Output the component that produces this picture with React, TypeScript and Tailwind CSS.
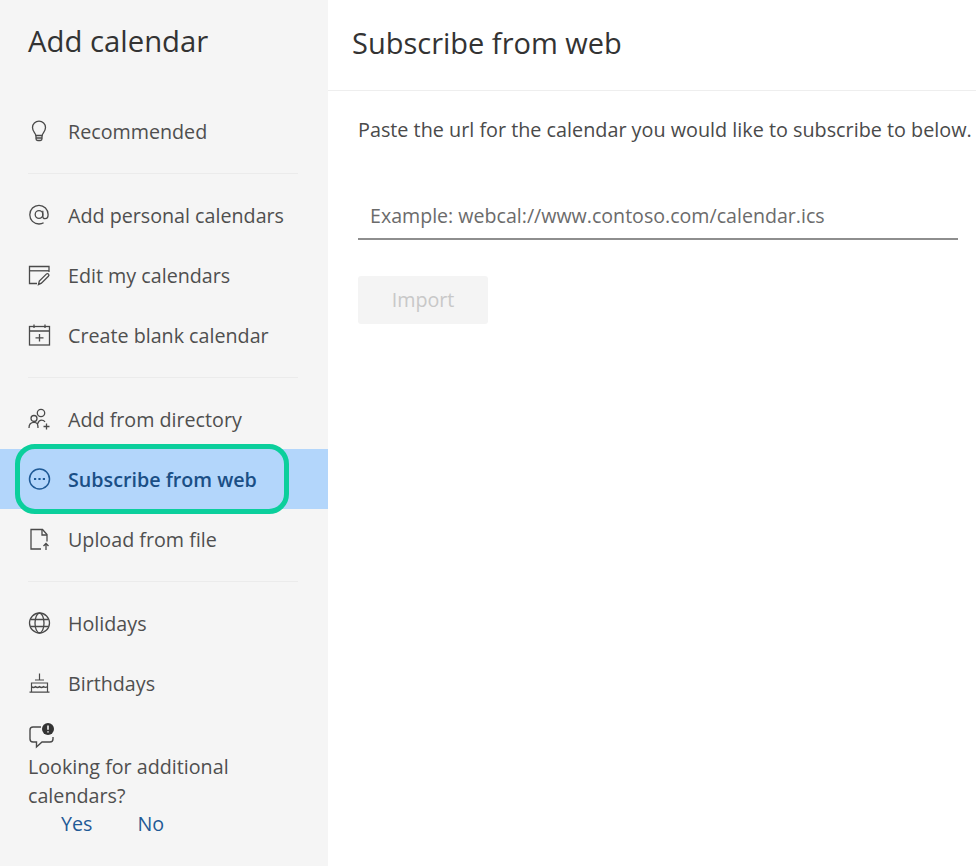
const iconClass = 'w-[24px] h-[24px] shrink-0 text-[#4a4a4a]';

function Bulb() {
  return (
    <svg className={iconClass} viewBox="0 0 24 24" fill="none" stroke="currentColor" strokeWidth="1.300">
      <path d="M8.800 16.500c0-2.200-3.300-3.600-3.300-8C5.500 5 8.400 2.200 12 2.200S18.500 5 18.500 8.500c0 4.400-3.300 5.800-3.300 8z" />
      <path d="M9 16.500v3.300c0 1 .8 1.700 1.700 1.700h2.600c.9 0 1.700-.7 1.700-1.700v-3.300M9 19h6" />
    </svg>
  );
}

function At() {
  return (
    <svg className={iconClass} viewBox="0 0 24 24" fill="none" stroke="currentColor" strokeWidth="1.300">
      <circle cx="12" cy="11.500" r="3.800" />
      <path d="M15.800 7.800v5.400c0 1.500 1 2.500 2.300 2.500 2 0 3-2 3-4.200 0-5-4-9.200-9.100-9.200S2.800 6.500 2.800 11.800 6.800 21 12 21c1.800 0 3.300-.4 4.600-1.200" />
    </svg>
  );
}

function EditCal() {
  return (
    <svg className={iconClass} viewBox="0 0 24 24" fill="none" stroke="currentColor" strokeWidth="1.300">
      <path d="M10 20.500H2.500V3.500h19.500v5.500" />
      <path d="M2.500 7.800h19.500" />
      <path d="M11.500 21.500l.8-3.400 7-7c.7-.7 1.700-.7 2.200 0 .6.600.5 1.500-.1 2.100l-7 7z" />
    </svg>
  );
}

function PlusCal() {
  return (
    <svg className={iconClass} viewBox="0 0 24 24" fill="none" stroke="currentColor" strokeWidth="1.300">
      <rect x="2.500" y="3.500" width="20" height="18.500" />
      <path d="M2.500 8h20M7 1.500v3.500M18 1.500v3.500M12.500 11v7.500M8.500 14.800h8" />
    </svg>
  );
}

function People() {
  return (
    <svg className={iconClass} viewBox="0 0 24 24" fill="none" stroke="currentColor" strokeWidth="1.300">
      <circle cx="14" cy="6" r="3.700" />
      <circle cx="7" cy="11.500" r="3" />
      <path d="M2 21c0-3.500 2.200-5.600 5-5.600 1.500 0 2.700.6 3.500 1.500 1-2.500 2.500-3.700 4-3.700s2.700.6 3.500 1.700M11 21c0-1.300-.2-2.800-.6-4M19.500 16.500v6M16.500 19.500h6" />
    </svg>
  );
}

function Dots() {
  return (
    <svg className={iconClass} viewBox="0 0 24 24" fill="none" stroke="#1f5a96" strokeWidth="1.500">
      <circle cx="12.500" cy="12" r="10" />
      <path d="M7 12h2.200M11.400 12h2.200M15.800 12h2.200" strokeWidth="2" />
    </svg>
  );
}

function UploadFile() {
  return (
    <svg className={iconClass} viewBox="0 0 24 24" fill="none" stroke="currentColor" strokeWidth="1.300">
      <path d="M14 22H4V2.500h11.500L20 7.500v7" />
      <path d="M15 2.500v5.500h5M19 23v-6M16.500 19l2.500-2.500 2.500 2.500" />
    </svg>
  );
}

function Globe() {
  return (
    <svg className={iconClass} viewBox="0 0 24 24" fill="none" stroke="currentColor" strokeWidth="1.300">
      <circle cx="12.500" cy="12" r="10" />
      <ellipse cx="12.500" cy="12" rx="4.500" ry="10" />
      <path d="M3.200 8.500h18.600M3.200 15.500h18.600" />
    </svg>
  );
}

function Cake() {
  return (
    <svg className={iconClass} viewBox="0 0 24 24" fill="none" stroke="currentColor" strokeWidth="1.200">
      <path d="M12.500 2.500v6.500M4.500 21v-9h16v9M2.500 21.200h20M8 9h9M4.500 15.500c1.300 1.300 2.700 1.300 4 0 1.300 1.300 2.700 1.300 4 0 1.300 1.300 2.700 1.300 4 0 1.300 1.300 2.700 1.300 4 0" />
    </svg>
  );
}

function Feedback() {
  return (
    <svg className="w-[28px] h-[26px] text-[#4a4a4a]" viewBox="0 0 28 26" fill="none" stroke="currentColor" strokeWidth="1.400">
      <path d="M13 4H5C3 4 2 5 2 7v9c0 2 1 3 3 3h3.500v5l5.500-5h8c2 0 3-1 3-3v-2" />
      <circle cx="20" cy="6" r="6" fill="#333333" stroke="none" />
      <path d="M20 2.500v4.200M20 8.200v1.300" stroke="#ffffff" strokeWidth="1.500" />
    </svg>
  );
}

function Item({ icon, label, active }: { icon: React.ReactNode; label: string; active?: boolean }) {
  return (
    <div className={`h-[60px] flex items-center gap-[17px] pl-[27px] text-[19.700px] ${active ? 'bg-[#b3d6fb] text-[#1a4f86] font-semibold' : 'text-[#4f4f4f]'}`}>
      {icon}
      <span className="pt-[2px]">{label}</span>
    </div>
  );
}

function Divider() {
  return <div className="h-px bg-[#ebebeb] ml-[28px] mr-[30px] mt-[12px] mb-[11px]" />;
}

export default function App() {
  return (
    <div className="w-[976px] h-[866px] flex bg-white overflow-hidden" style={{ fontFamily: '"Open Sans", "Noto Sans", sans-serif' }}>
      <aside className="relative w-[328px] shrink-0 bg-[#f5f5f5]">
        <h2 className="h-[101px] pl-[28px] pt-[20px] text-[29.300px] leading-[42px] font-medium text-[#333333]">Add calendar</h2>
        <Item icon={<Bulb />} label="Recommended" />
        <Divider />
        <Item icon={<At />} label="Add personal calendars" />
        <Item icon={<EditCal />} label="Edit my calendars" />
        <Item icon={<PlusCal />} label="Create blank calendar" />
        <Divider />
        <Item icon={<People />} label="Add from directory" />
        <Item icon={<Dots />} label="Subscribe from web" active />
        <Item icon={<UploadFile />} label="Upload from file" />
        <Divider />
        <Item icon={<Globe />} label="Holidays" />
        <Item icon={<Cake />} label="Birthdays" />
        <div className="pl-[28px] pt-[10px] text-[19.700px] leading-[28.500px] text-[#4f4f4f]">
          <Feedback />
          <p className="w-[240px] mt-[4px]">Looking for additional calendars?</p>
          <div className="flex gap-[45px] pl-[33px] text-[#1f5a96]">
            <span>Yes</span>
            <span>No</span>
          </div>
        </div>
        <div className="absolute left-[15px] top-[444px] w-[274px] h-[70px] rounded-[20px] border-[5px] border-[#0bcf9c]" />
      </aside>
      <main className="flex-1 min-w-0">
        <header className="h-[91px] border-b border-[#eeeeee] pl-[24px] pt-[22px]">
          <h1 className="text-[29px] leading-[42px] font-medium text-[#333333] whitespace-nowrap">Subscribe from web</h1>
        </header>
        <div className="pl-[30px] pt-[25px]">
          <p className="text-[19.800px] leading-[28px] text-[#4a4a4a] whitespace-nowrap">Paste the url for the calendar you would like to subscribe to below.</p>
          <div className="w-[600px] h-[62px] mt-[34px] flex items-end pb-[8px] pl-[12px] border-b-2 border-[#8e8e8e] text-[19.600px] leading-[28px] text-[#6b6b6b] whitespace-nowrap">
            Example: webcal://www.contoso.com/calendar.ics
          </div>
          <button className="mt-[36px] w-[130px] h-[48px] rounded-[3px] bg-[#f4f4f4] text-[19.700px] text-[#c8c8c8]">Import</button>
        </div>
      </main>
    </div>
  );
}
